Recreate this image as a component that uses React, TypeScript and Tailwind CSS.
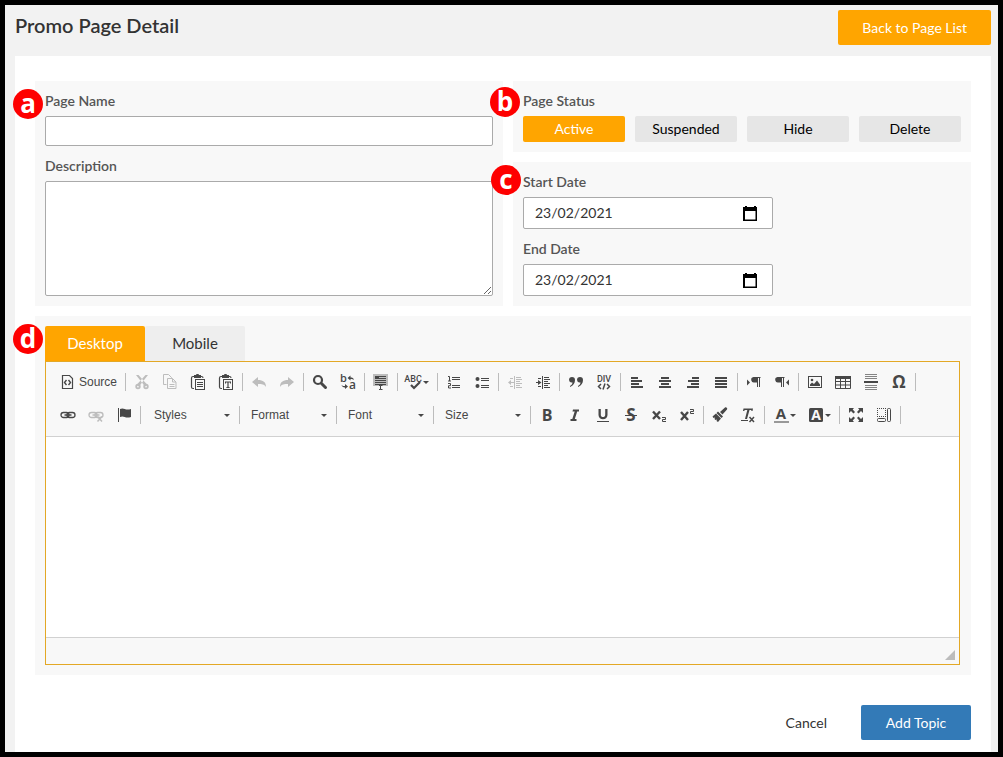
import { useState } from 'react';
import type { ReactNode } from 'react';

const STATUSES = ['Active', 'Suspended', 'Hide', 'Delete'];
const COMBOS = ['Styles', 'Format', 'Font', 'Size'];

interface Tool {
  name: string;
  icon: ReactNode;
  disabled?: boolean;
  menu?: boolean;
}

const lines = (rows: [number, number, number][]) =>
  rows.map(([x, y, w], i) => <rect key={i} x={x} y={y} width={w} height="1" />);

const bars = (rows: [number, number, number][]) =>
  rows.map(([x, y, w], i) => <rect key={i} x={x} y={y} width={w} height="2" />);

const clipboard = (
  <>
    <path d="M4 2.500H3A1.500 1.500 0 0 0 1.500 4v9A1.500 1.500 0 0 0 3 14.500h1M11 2.500h.5A1.500 1.500 0 0 1 13 4" fill="none" stroke="currentColor" strokeWidth="1.200" />
    <path d="M4 1h2l.5-1h2L9 1h2v3H4z" />
    <rect x="5.500" y="5.500" width="9" height="10" fill="#f8f8f8" stroke="currentColor" />
  </>
);

const link = (
  <g fill="none" stroke="currentColor" strokeWidth="1.300">
    <rect x="1" y="5.500" width="8" height="5" rx="2.500" />
    <rect x="7" y="5.500" width="8" height="5" rx="2.500" />
    <path d="M4.500 8h7" strokeWidth="1.500" />
  </g>
);

const cut: Tool = {
  name: 'Cut',
  disabled: true,
  icon: (
    <>
      <path d="M2 1l2.500 0 9 10-2.500 1.500zM14 1l-2.500 0-9 10 2.500 1.500z" />
      <circle cx="4" cy="12.500" r="1.800" fill="none" stroke="currentColor" strokeWidth="1.800" />
      <circle cx="12" cy="12.500" r="1.800" fill="none" stroke="currentColor" strokeWidth="1.800" />
    </>
  ),
};

const copy: Tool = {
  name: 'Copy',
  disabled: true,
  icon: (
    <g fill="none" stroke="currentColor">
      <path d="M4.500 10.500h-3v-10h5l3 3v1" />
      <path d="M5.500 4.500h5l3.500 3.500v6.500H5.500zM10.500 4.500V8H14" fill="#f8f8f8" />
      <path d="M7.500 10.500h5M7.500 12.500h5" />
    </g>
  ),
};

const paste: Tool = {
  name: 'Paste',
  icon: <>{clipboard}{lines([[7, 8, 6], [7, 10, 6], [7, 12, 6]])}</>,
};

const pasteText: Tool = {
  name: 'Paste as plain text',
  icon: <>{clipboard}<path d="M7 7.500h6v2h-1v-1h-1.400V13h1v1H8.400v-1h1V8.500H8v1H7z" /></>,
};

const undo: Tool = {
  name: 'Undo',
  disabled: true,
  icon: <path d="M1 8l6-5v3c5 0 8 2 8 7-2-3-4-3-8-3v3z" />,
};

const redo: Tool = {
  name: 'Redo',
  disabled: true,
  icon: <path d="M15 8L9 3v3c-5 0-8 2-8 7 2-3 4-3 8-3v3z" />,
};

const find: Tool = {
  name: 'Find',
  icon: (
    <g fill="none" stroke="currentColor">
      <circle cx="6" cy="6" r="4" strokeWidth="2.200" />
      <path d="M9.500 9.500l4 4" strokeWidth="3" strokeLinecap="round" />
    </g>
  ),
};

const replace: Tool = {
  name: 'Replace',
  icon: (
    <>
      <text x="0" y="8" fontSize="11" fontWeight="600" fontFamily="Open Sans, sans-serif">b</text>
      <text x="9" y="15" fontSize="12" fontWeight="600" fontFamily="Open Sans, sans-serif">a</text>
      <path d="M7.500 4l3-2.500V3.500c2 0 3 .5 3.500 2.500-1-1-2-1-3.500-1v1.500zM8 12.500L5 15v-1.500c-2 0-3-1-3.500-2.500 1 1 2 1 3.500 1V10z" />
    </>
  ),
};

const selectAll: Tool = {
  name: 'Select all',
  icon: (
    <>
      <rect x="0" y="0" width="15" height="12" fill="#bdbdbd" />
      {lines([[6, 2, 7], [6, 4, 7], [2, 6, 11], [2, 8, 11], [2, 10, 11]])}
      <path d="M2 2h4v3H2z" />
      <path d="M6 11.500h1.500v4H6M9.500 11.500H7.500M9.500 15.500H7.500" fill="none" stroke="currentColor" />
    </>
  ),
};

const spell: Tool = {
  name: 'Spell check',
  menu: true,
  icon: (
    <>
      <text x="7" y="8" textAnchor="middle" fontSize="9" fontWeight="500" fontFamily="Roboto, sans-serif">ABC</text>
      <path d="M5 11l3 3 6-6" fill="none" stroke="currentColor" strokeWidth="2.200" />
    </>
  ),
};

const numbered: Tool = {
  name: 'Numbered list',
  icon: (
    <>
      {lines([[6, 3, 8], [6, 5, 8], [6, 11, 8], [6, 13, 8]])}
      <path d="M2 2.500h1.500V7M2 7h3M2 9.500h2.500v2.200H2.500V14H5" fill="none" stroke="currentColor" />
    </>
  ),
};

const bulleted: Tool = {
  name: 'Bulleted list',
  icon: (
    <>
      <circle cx="3.500" cy="5" r="2" />
      <circle cx="3.500" cy="12" r="2" />
      {lines([[7, 4, 8], [7, 6, 8], [7, 11, 8], [7, 13, 8]])}
    </>
  ),
};

const outdent: Tool = {
  name: 'Decrease indent',
  disabled: true,
  icon: (
    <>
      {lines([[2, 8, 5], [9, 3, 5], [9, 5, 6], [9, 7, 4], [9, 9, 6], [9, 11, 4], [9, 13, 6]])}
      <path d="M1 8.500L4 6v5zM7 2h1v13H7z" />
      {lines([[3, 4, 3], [3, 12, 3]])}
    </>
  ),
};

const indent: Tool = {
  name: 'Increase indent',
  icon: (
    <>
      {lines([[1, 8, 4], [9, 3, 5], [9, 5, 6], [9, 7, 4], [9, 9, 6], [9, 11, 4], [9, 13, 6]])}
      <path d="M6.500 8.500L3 6v5zM7 2h1v13H7z" />
      {lines([[3, 4, 3], [3, 12, 3]])}
    </>
  ),
};

const quote: Tool = {
  name: 'Block quote',
  icon: (
    <>
      <path d="M1 6a3 3 0 1 1 6 0c0 3-1.500 5.500-5 7v-1c1.500-1 2.500-2 2.500-3.500A3 3 0 0 1 1 6z" />
      <path d="M9 6a3 3 0 1 1 6 0c0 3-1.500 5.500-5 7v-1c1.500-1 2.500-2 2.500-3.500A3 3 0 0 1 9 6z" />
    </>
  ),
};

const div: Tool = {
  name: 'Create div',
  icon: (
    <>
      <text x="8" y="8" textAnchor="middle" fontSize="9" fontWeight="500" fontFamily="Roboto, sans-serif">DIV</text>
      <path d="M5 10l-2.500 2.500L5 15M11 10l2.500 2.500L11 15M9 9.500L7 15.500" fill="none" stroke="currentColor" strokeWidth="1.500" />
    </>
  ),
};

const alignLeft: Tool = { name: 'Align left', icon: bars([[2, 3, 7], [2, 6, 11], [2, 9, 8], [2, 12, 12]]) };
const alignCenter: Tool = { name: 'Center', icon: bars([[4, 3, 8], [2, 6, 12], [4, 9, 8], [2, 12, 12]]) };
const alignRight: Tool = { name: 'Align right', icon: bars([[7, 3, 7], [3, 6, 11], [6, 9, 8], [2, 12, 12]]) };
const justify: Tool = { name: 'Justify', icon: bars([[2, 3, 12], [2, 6, 12], [2, 9, 12], [2, 12, 12]]) };

const pilcrow = 'M3.500 3h7v1H10v9H9V4H8v9H7V8.500H4.500a2.750 2.750 0 0 1-1-5.500z';

const ltr: Tool = {
  name: 'Left to right',
  icon: <><path d="M1 5.500v6L4 8.500z" /><path d={pilcrow} transform="translate(4 0)" /></>,
};
const rtl: Tool = {
  name: 'Right to left',
  icon: <><path d="M15 5.500v6L12 8.500z" /><path d={pilcrow} /></>,
};

const image: Tool = {
  name: 'Image',
  icon: (
    <>
      <rect x="1.500" y="2.500" width="13" height="11" fill="none" stroke="currentColor" />
      <circle cx="5" cy="6" r="1.300" />
      <path d="M3 12V10.500l2-2 2 1.500 3-3.500 3 4V12z" />
    </>
  ),
};

const table: Tool = {
  name: 'Table',
  icon: (
    <>
      <rect y="2" width="16" height="3" />
      <path d="M.5 4v10.500h15V4M.5 7.500h15M.5 11h15M5.500 5v9M10.500 5v9" fill="none" stroke="currentColor" />
    </>
  ),
};

const hr: Tool = {
  name: 'Horizontal line',
  icon: (
    <>
      <g opacity="0.65">{lines([[2, 0, 12], [2, 2, 12], [2, 4, 12], [2, 11, 12], [2, 13, 12], [2, 15, 12]])}</g>
      <rect x="1" y="7" width="14" height="2" />
    </>
  ),
};

const glyph = (char: string, size = 16) => (
  <text x="8" y="14" textAnchor="middle" fontSize={size} fontFamily="Open Sans, sans-serif" fontWeight="700">
    {char}
  </text>
);

const omega: Tool = { name: 'Special character', icon: glyph('Ω', 17) };

const linkTool: Tool = { name: 'Link', icon: link };
const unlink: Tool = {
  name: 'Unlink',
  disabled: true,
  icon: <>{link}<path d="M9.500 9.500l4.500 5M14 9.500l-4.500 5" stroke="currentColor" strokeWidth="1.500" /></>,
};
const flag: Tool = {
  name: 'Anchor',
  icon: <path d="M2 1h1v14H2zM4 2c4-2 5 2 11 0v8c-6 2-7-2-11 0z" />,
};

const bold: Tool = { name: 'Bold', icon: glyph('B') };
const italic: Tool = { name: 'Italic', icon: <path d="M6 2.500h6v2h-1.800L7.800 12h1.700v2H3.500v-2h1.800l2.400-7.500H5.500z" /> };
const underline: Tool = {
  name: 'Underline',
  icon: (
    <>
      <path d="M3.500 2h2.300v6c0 2.700 4.400 2.700 4.400 0V2h2.300v6c0 5.600-9 5.600-9 0z" />
      <rect x="2" y="14" width="12" height="1" />
    </>
  ),
};
const strike: Tool = {
  name: 'Strikethrough',
  icon: <>{glyph('S', 17)}<rect x="2" y="8" width="12" height="1" /></>,
};
const sub: Tool = {
  name: 'Subscript',
  icon: (
    <>
      <path d="M2 4.500l7 7.500M9 4.500l-7 7.500" stroke="currentColor" strokeWidth="2.400" />
      <path d="M11 10.500h3.500v2H11.500v2H15" fill="none" stroke="currentColor" />
    </>
  ),
};
const sup: Tool = {
  name: 'Superscript',
  icon: (
    <>
      <path d="M2 5l7 8M9 5l-7 8" stroke="currentColor" strokeWidth="2.400" />
      <path d="M11 2.500h3.500v2H11.500v2H15" fill="none" stroke="currentColor" />
    </>
  ),
};
const brush: Tool = {
  name: 'Copy formatting',
  icon: (
    <path d="M6 4.500L11 9.500 9.500 11 4.500 6zM4 6.500L9 11.500 6 15l-1.500-1 .5-1.500L3.500 13l-1-1 .5-1.500L1.500 11 .5 9.500zM8 5l5-4.500c1-1 3 1 2 2L10.500 7.500z" />
  ),
};
const removeFormat: Tool = {
  name: 'Remove format',
  icon: (
    <>
      <path d="M3.500 1.500h9.500L12.500 4h-1l-.3-1H9.500L7 12h-2L7.300 3H5L4 4H3z" />
      <path d="M9.500 10l4.500 5M14 10l-4.500 5" stroke="currentColor" strokeWidth="1.500" />
      <rect x="1" y="13" width="7" height="1" />
    </>
  ),
};
const textColor: Tool = {
  name: 'Text color',
  menu: true,
  icon: (
    <>
      <text x="8" y="12" textAnchor="middle" fontSize="15" fontWeight="700" fontFamily="Open Sans, sans-serif">A</text>
      <rect x="1" y="14" width="15" height="2" fill="#999" />
    </>
  ),
};
const backColor: Tool = {
  name: 'Background color',
  menu: true,
  icon: (
    <>
      <rect x="1" y="1" width="14" height="14" rx="1.500" />
      <text x="8" y="13" textAnchor="middle" fontSize="14" fontWeight="700" fill="#f8f8f8" fontFamily="Open Sans, sans-serif">A</text>
    </>
  ),
};
const maximize: Tool = {
  name: 'Maximize',
  icon: (
    <path d="M1 1h5L4.700 2.500 7 5 5.500 6.500 3 4 1 6zM15 1v5l-2-2-2.500 2.500L9 5l2.300-2.500L10 1zM1 15v-5l2 2 2.500-2.500L7 11l-2.300 2.500L6 15zM15 15h-5l1.300-1.500L9 11l1.500-1.500L13 12l2-2z" />
  ),
};
const showBlocks: Tool = {
  name: 'Show blocks',
  icon: (
    <g fill="none" stroke="currentColor">
      <path d="M1 1.500h9M1 9.500h9M1.500 1v9M9.500 1v9" strokeDasharray="1 1" />
      <rect x="1.500" y="11.500" width="8" height="3" rx="1" />
      <rect x="11.500" y="1.500" width="3" height="13" rx="1" />
    </g>
  ),
};

const TOP_GROUPS: Tool[][] = [
  [cut, copy, paste, pasteText],
  [undo, redo],
  [find, replace],
  [selectAll],
  [spell],
  [numbered, bulleted],
  [outdent, indent],
  [quote, div],
  [alignLeft, alignCenter, alignRight, justify],
  [ltr, rtl],
  [image, table, hr, omega],
];

const BOTTOM_GROUPS: Tool[][] = [
  [bold, italic, underline, strike, sub, sup],
  [brush, removeFormat],
  [textColor, backColor],
  [maximize, showBlocks],
];

function Separator() {
  return <span className="mx-0.5 h-[18px] w-px shrink-0 bg-[#bcbcbc]" />;
}

function Caret({ className = '' }: { className?: string }) {
  return (
    <svg viewBox="0 0 6 3" className={`h-[3px] w-1.5 shrink-0 ${className}`} fill="#474747">
      <path d="M0 0h6L3 3z" />
    </svg>
  );
}

function ToolButton({ tool }: { tool: Tool }) {
  return (
    <button
      type="button"
      aria-label={tool.name}
      title={tool.name}
      disabled={tool.disabled}
      className={`flex h-7 shrink-0 items-center pl-1.5 ${tool.menu ? 'w-[35px]' : 'w-7'} ${
        tool.disabled ? 'text-[#bdbdbd]' : 'text-[#474747]'
      }`}
    >
      <svg viewBox="0 0 16 16" className="size-4 shrink-0 overflow-visible" fill="currentColor">
        {tool.icon}
      </svg>
      {tool.menu && <Caret className="ml-px" />}
    </button>
  );
}

function ToolGroup({ tools }: { tools: Tool[] }) {
  return (
    <div className="flex items-center">
      {tools.map((tool) => (
        <ToolButton key={tool.name} tool={tool} />
      ))}
      <Separator />
    </div>
  );
}

function Combo({ label }: { label: string }) {
  return (
    <div className="flex items-center">
      <div className="relative flex items-center">
        <select
          aria-label={label}
          className="h-7 w-[92px] appearance-none pl-[9px] font-['Liberation_Sans',sans-serif] text-xs text-[#474747]"
        >
          <option>{label}</option>
        </select>
        <Caret className="pointer-events-none absolute right-[7px]" />
      </div>
      <Separator />
    </div>
  );
}

function Editor() {
  return (
    <div className="bg-[#e3a826] p-px">
      <div className="border-b border-[#d1d1d1] bg-[#f8f8f8] px-2 pt-1 pb-[5px]">
        <div className="flex h-8 items-center">
          <button
            type="button"
            className="flex h-7 w-[69px] shrink-0 items-center gap-[3px] pl-1.5 font-['Liberation_Sans',sans-serif] text-xs text-[#474747]"
          >
            <svg viewBox="0 0 16 16" className="size-4 shrink-0" fill="none" stroke="currentColor">
              <path d="M2.500 1.500h7l3 3v10h-10z" strokeWidth="1.200" />
              <path d="M6.500 6L4.500 8.500l2 2.500M8.500 6l2 2.500-2 2.500" strokeWidth="1.400" />
            </svg>
            Source
          </button>
          <Separator />
          {TOP_GROUPS.map((group) => (
            <ToolGroup key={group[0].name} tools={group} />
          ))}
        </div>
        <div className="mt-px flex h-8 items-center">
          <ToolGroup tools={[linkTool, unlink, flag]} />
          <div className="ml-0.5 flex">
            {COMBOS.map((label) => (
              <Combo key={label} label={label} />
            ))}
          </div>
          {BOTTOM_GROUPS.map((group) => (
            <ToolGroup key={group[0].name} tools={group} />
          ))}
        </div>
      </div>
      <div
        contentEditable
        suppressContentEditableWarning
        role="textbox"
        aria-label="Page content"
        className="min-h-[200px] bg-white p-5 text-sm outline-none"
      />
      <div className="flex h-[27px] items-end justify-end border-t border-[#d1d1d1] bg-[#f8f8f8] p-1">
        <svg viewBox="0 0 10 10" className="size-2.5" fill="#bcbcbc">
          <path d="M10 0v10H0z" />
        </svg>
      </div>
    </div>
  );
}

function Marker({ letter, className }: { letter: string; className: string }) {
  return (
    <span
      className={`absolute flex size-[30px] items-center justify-center rounded-full bg-[#fe0000] pb-0.5 font-['Open_Sans',sans-serif] text-[26px] leading-none font-bold text-white ${className}`}
    >
      {letter}
    </span>
  );
}

function DateField({ id, label }: { id: string; label: string }) {
  const [value, setValue] = useState('23/02/2021');
  return (
    <div>
      <label htmlFor={id} className="block text-sm leading-5 font-semibold text-[#555]">
        {label}
      </label>
      <div className="mt-[5px] flex h-8 w-[250px] items-center rounded-xs border border-[#aaa] bg-white pr-3.5">
        <input
          id={id}
          value={value}
          onChange={(e) => setValue(e.target.value)}
          className="min-w-0 flex-1 pl-[11px] text-sm text-[#333] outline-none"
        />
        <button type="button" aria-label={`Pick ${label.toLowerCase()}`} className="text-black">
          <svg viewBox="0 0 16 16" className="size-4" fill="currentColor">
            <path d="M3 1h2v1h7V1h2v1h1v14H1V2h2zM3 6v8.500h10.500V6z" fillRule="evenodd" />
          </svg>
        </button>
      </div>
    </div>
  );
}

export default function App() {
  const [status, setStatus] = useState('Active');
  const [tab, setTab] = useState('Desktop');

  return (
    <div className="flex min-h-screen flex-col border-5 border-black bg-[#f2f2f2] pr-[7px] pl-2.5 font-[Lato,sans-serif] text-[#333]">
      <header className="flex h-[51px] items-start justify-between">
        <h1 className="pt-2 text-xl leading-6 font-semibold">Promo Page Detail</h1>
        <button type="button" className="mt-[5px] h-[35px] rounded-xs bg-[#ffa500] px-6 text-sm text-white">
          Back to Page List
        </button>
      </header>

      <main className="flex-1 bg-white px-5 pt-[25px] pb-3">
        <div className="grid grid-cols-[468fr_458fr] gap-2.5">
          <section className="relative bg-[#f8f8f8] p-2.5">
            <Marker letter="a" className="top-2 -left-[22px]" />
            <label htmlFor="page-name" className="block text-sm leading-5 font-semibold text-[#555]">
              Page Name
            </label>
            <input
              id="page-name"
              className="mt-[5px] block h-[30px] w-full rounded-xs border border-[#aaa] bg-white px-3 text-sm outline-none"
            />
            <label htmlFor="description" className="mt-2.5 block text-sm leading-5 font-semibold text-[#555]">
              Description
            </label>
            <textarea
              id="description"
              className="mt-[5px] block h-[115px] w-full rounded-xs border border-[#aaa] bg-white px-3 py-1.5 text-sm outline-none"
            />
          </section>

          <div className="flex flex-col gap-2.5">
            <section className="relative bg-[#f8f8f8] p-2.5">
              <Marker letter="b" className="top-1.5 -left-[23px]" />
              <h2 className="text-sm leading-5 font-semibold text-[#555]">Page Status</h2>
              <div className="mt-[5px] grid grid-cols-4 gap-2.5">
                {STATUSES.map((s) => (
                  <button
                    key={s}
                    type="button"
                    aria-pressed={s === status}
                    onClick={() => setStatus(s)}
                    className={`h-[26px] rounded-xs text-sm ${
                      s === status ? 'bg-[#ffa500] text-white' : 'bg-[#e6e6e6] text-black'
                    }`}
                  >
                    {s}
                  </button>
                ))}
              </div>
            </section>
            <section className="relative flex flex-1 flex-col gap-2.5 bg-[#f8f8f8] p-2.5">
              <Marker letter="c" className="top-[3px] -left-[22px]" />
              <DateField id="start-date" label="Start Date" />
              <DateField id="end-date" label="End Date" />
            </section>
          </div>
        </div>

        <section className="relative mt-2.5 bg-[#f8f8f8] p-2.5">
          <Marker letter="d" className="top-2 -left-[22px]" />
          <div role="tablist" className="flex">
            {['Desktop', 'Mobile'].map((t) => (
              <button
                key={t}
                type="button"
                role="tab"
                aria-selected={t === tab}
                onClick={() => setTab(t)}
                className={`h-[35px] w-[100px] rounded-t-xs text-[15px] ${
                  t === tab ? 'bg-[#ffa500] text-white' : 'bg-[#eee] text-[#333]'
                }`}
              >
                {t}
              </button>
            ))}
          </div>
          <div className="pr-px">
            <Editor />
          </div>
        </section>

        <div className="mt-[30px] flex justify-end gap-2.5">
          <button type="button" className="h-[35px] px-6 text-sm">
            Cancel
          </button>
          <button type="button" className="h-[35px] w-[110px] rounded-xs bg-[#337ab7] text-sm text-white">
            Add Topic
          </button>
        </div>
      </main>
    </div>
  );
}
